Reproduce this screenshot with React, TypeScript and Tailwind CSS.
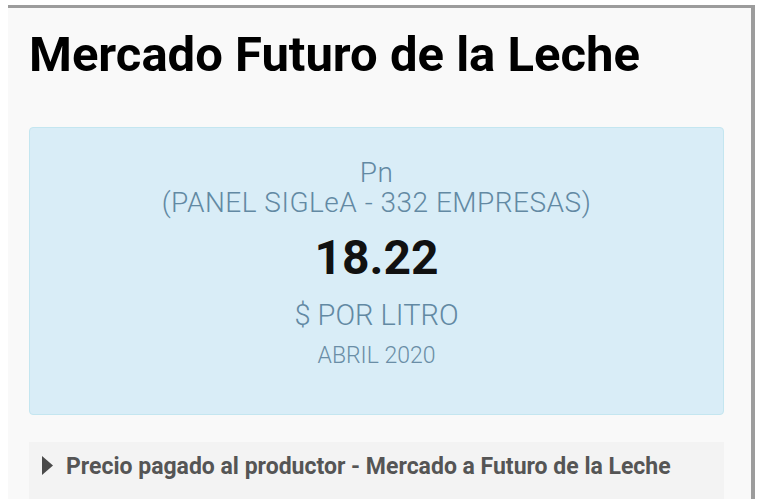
export default function App() {
  return (
    <div className="h-[499px] bg-white pl-[8px] pt-[5px] font-['Roboto',sans-serif] overflow-hidden">
      <div className="w-[747px] h-[520px] bg-[#f9f9f9] border-t-[3px] border-r-[4px] border-[#9c9c9c] pl-[21px] pr-[27px]">
        <h1 className="pt-[19px] text-[49px] leading-[56px] font-bold text-black">
          Mercado Futuro de la Leche
        </h1>

        {/* Price box */}
        <div className="mt-[44px] h-[288px] rounded-[4px] border border-[#c4e6f0] bg-[#d9edf7] flex flex-col items-center pt-[30px] text-[#6289a3] font-light">
          <div className="text-[28px] leading-[30px] tracking-[0.5px]">Pn</div>
          <div className="text-[28px] leading-[30px] tracking-[0.5px]">(PANEL SIGLeA - 332 EMPRESAS)</div>
          <div className="mt-[12px] text-[48px] leading-[56px] font-bold text-[#111]">18.22</div>
          <div className="mt-[13px] text-[29px] leading-[32px]">$ POR LITRO</div>
          <div className="mt-[12px] text-[23px] leading-[26px] text-[#6a8da6]">ABRIL 2020</div>
        </div>

        {/* Collapsible summary */}
        <div className="mt-[27px] bg-[#f3f3f3] h-[80px] flex items-start pt-[11px] pl-[13px]">
          <svg width="11" height="19" viewBox="0 0 11 19" className="mt-[3px] mr-[13px] shrink-0">
            <path d="M0 0 L11 9.5 L0 19 Z" fill="#4a4a4a" />
          </svg>
          <span className="text-[23px] leading-[28px] font-bold text-[#555]">
            Precio pagado al productor - Mercado a Futuro de la Leche
          </span>
        </div>
      </div>
    </div>
  )
}
